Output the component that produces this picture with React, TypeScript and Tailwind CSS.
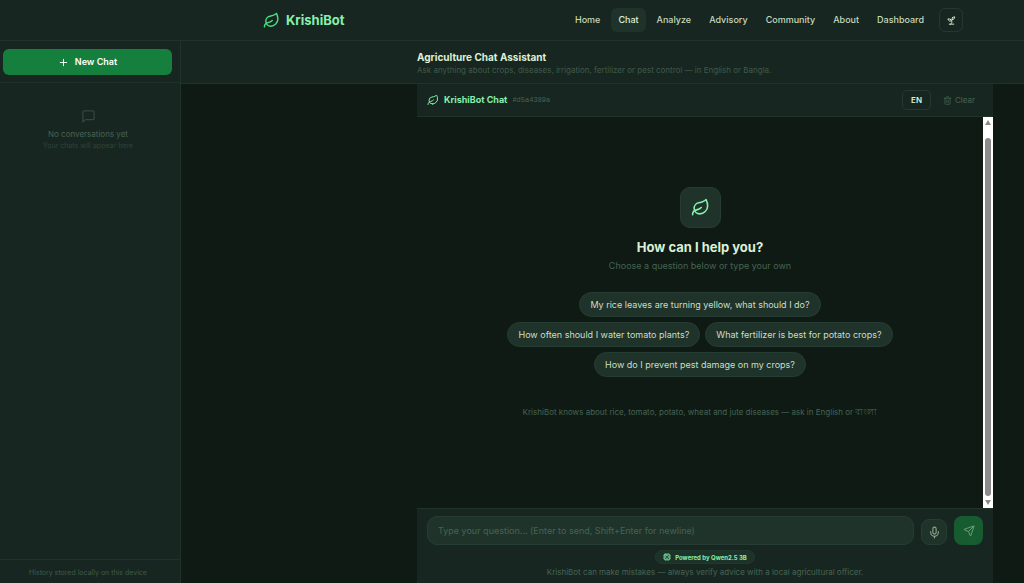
import React, { useState } from 'react';
import { Leaf, Mic, Plus, Send, Trash2, Cpu } from 'lucide-react';
import { FiMessageSquare } from 'react-icons/fi';

const navItems = ['Home', 'Chat', 'Analyze', 'Advisory', 'Community', 'About', 'Dashboard'];

const suggestions = [
  'My rice leaves are turning yellow, what should I do?',
  'How often should I water tomato plants?',
  'What fertilizer is best for potato crops?',
  'How do I prevent pest damage on my crops?',
];

function SeedlingIcon() {
  return (
    <svg width="11" height="11" viewBox="0 0 24 24" fill="none" stroke="currentColor" strokeWidth="2" strokeLinecap="round" strokeLinejoin="round">
      <path d="M7 20h10" />
      <path d="M10 20c5.5-2.5.8-6.4 3-10" />
      <path d="M9.5 9.4c1.1.8 1.8 2.2 2.3 3.7-2 .4-3.5.4-4.8-.3-1.2-.6-2.3-1.9-3-4.2 2.8-.5 4.4 0 5.5.8z" />
      <path d="M14.1 6a7 7 0 0 0-1.1 4c1.9-.1 3.3-.6 4.3-1.4 1-1 1.6-2.3 1.7-4.6-2.7.1-4 1-4.9 2z" />
    </svg>
  );
}

function Navbar() {
  return (
    <header className="flex h-[41px] shrink-0 items-center justify-between border-b border-[#20332b] bg-[#182621] pr-[61px] pl-[263px]">
      <a href="#home" className="flex items-center gap-1.5 text-[13px] leading-5 font-bold text-[#86efac]">
        <Leaf size={17} className="text-[#4ade80]" />
        KrishiBot
      </a>
      <div className="flex items-center gap-2">
        <nav className="flex items-center gap-1">
          {navItems.map((item) => (
            <a
              key={item}
              href={`#${item.toLowerCase()}`}
              className={
                item === 'Chat'
                  ? 'rounded-md bg-[#1f332b] px-[7px] py-1 text-[9px] leading-4 font-medium text-[#dcf0d5]'
                  : 'rounded-md px-[7px] py-1 text-[9px] leading-4 font-medium text-[#c5d9bd]'
              }
            >
              {item}
            </a>
          ))}
        </nav>
        <button aria-label="Toggle theme" className="flex size-6 items-center justify-center rounded-md border border-[#26392f] text-[#dcf0d5]">
          <SeedlingIcon />
        </button>
      </div>
    </header>
  );
}

function Sidebar() {
  return (
    <aside className="flex w-[181px] shrink-0 flex-col border-r border-[#20332b] bg-[#182621]">
      <div className="border-b border-[#20332b] pt-2 pr-2 pb-[7px] pl-[3px]">
        <button className="flex h-[26px] w-full items-center justify-center gap-1.5 rounded-md bg-[#15803d] text-[9px] font-semibold text-white">
          <Plus size={11} />
          New Chat
        </button>
      </div>
      <div className="flex flex-1 flex-col items-center pt-[26px] pr-1 text-center">
        <FiMessageSquare size={15} className="text-[#31483c]" />
        <p className="mt-1 text-[8px] leading-3 text-[#466353]">No conversations yet</p>
        <p className="text-[7px] leading-3 text-[#2e4438]">Your chats will appear here</p>
      </div>
      <p className="border-t border-[#20332b] pt-[7px] pr-1 pb-1 text-center text-[7px] leading-3 text-[#3f5a4a]">
        History stored locally on this device
      </p>
    </aside>
  );
}

function ChatHeader() {
  return (
    <div className="flex h-[33px] shrink-0 items-center justify-between border-b border-[#20332b] bg-[#182621] px-2.5">
      <div className="flex items-center gap-[5px]">
        <Leaf size={12} className="text-[#86efac]" />
        <h2 className="text-[9px] font-bold text-[#86efac]">KrishiBot Chat</h2>
        <span className="font-['Liberation_Mono',monospace] text-[7px] text-[#466353]">#d5a4389a</span>
      </div>
      <div className="flex items-center gap-1">
        <button className="h-5 rounded-[5px] border border-[#26392f] px-2 text-[8px] font-semibold text-[#dcf0d5]">EN</button>
        <button className="flex items-center gap-[3px] px-2 text-[8px] text-[#466353]">
          <Trash2 size={9} />
          Clear
        </button>
      </div>
    </div>
  );
}

function ScrollTrack() {
  return (
    <div className="flex w-2.5 shrink-0 flex-col items-center justify-between bg-white py-[3px]" aria-hidden="true">
      <svg width="6" height="5" viewBox="0 0 6 5">
        <path d="M3 0L6 5H0Z" fill="#8b8b8b" />
      </svg>
      <div className="mt-[13px] mb-1 w-1.5 flex-1 rounded-full bg-[#8b8b8b]" />
      <svg width="6" height="5" viewBox="0 0 6 5">
        <path d="M3 5L6 0H0Z" fill="#8b8b8b" />
      </svg>
    </div>
  );
}

function EmptyState({ onPick }: { onPick: (text: string) => void }) {
  return (
    <div className="flex flex-1 flex-col items-center pt-[70px] text-center">
      <div className="flex size-[41px] items-center justify-center rounded-[10px] border border-[#263d33] bg-[#1f332b]">
        <Leaf size={19} className="text-[#86efac]" />
      </div>
      <h3 className="mt-[9px] text-[13px] leading-5 font-bold text-[#dcf0d5]">How can I help you?</h3>
      <p className="mt-0.5 text-[9px] leading-3.5 text-[#466353]">Choose a question below or type your own</p>
      <div className="mt-[19px] flex max-w-[410px] flex-wrap justify-center gap-[5px]">
        {suggestions.map((text) => (
          <button
            key={text}
            onClick={() => onPick(text)}
            className="h-[25px] rounded-full border border-[#263d33] bg-[#1f332b] px-2.5 text-[9px] text-[#c9dfc3]"
          >
            {text}
          </button>
        ))}
      </div>
      <p className="mt-[29px] text-[8px] leading-3 text-[#466353]">
        KrishiBot knows about rice, tomato, potato, wheat and jute diseases — ask in English or{' '}
        <span lang="bn" className="text-[9px]">বাংলা</span>
      </p>
    </div>
  );
}

function App() {
  const [input, setInput] = useState('');

  return (
    <div className="flex h-screen flex-col overflow-hidden bg-[#0f1a14] font-['Inter',sans-serif]">
      <Navbar />
      <div className="flex min-h-0 flex-1">
        <Sidebar />
        <main className="flex min-w-0 flex-1 flex-col">
          <div className="h-[43px] shrink-0 border-b border-[#20332b] bg-[#182621] pt-[9px] pl-[236px]">
            <h1 className="text-[10px] leading-3.5 font-bold text-[#dcf0d5]">Agriculture Chat Assistant</h1>
            <p className="text-[8px] leading-3 text-[#3f5a4a]">
              Ask anything about crops, diseases, irrigation, fertilizer or pest control — in English or Bangla.
            </p>
          </div>
          <section className="mr-[31px] ml-[236px] flex min-h-0 flex-1 flex-col">
            <ChatHeader />
            <div className="flex min-h-0 flex-1">
              <EmptyState onPick={setInput} />
              <ScrollTrack />
            </div>
            <form
              onSubmit={(e) => e.preventDefault()}
              className="flex shrink-0 flex-col items-center border-t border-[#20332b] bg-[#182621] px-2.5 pt-[7px] pb-[5px]"
            >
              <div className="flex w-full items-end gap-[7px]">
                <input
                  aria-label="Your question"
                  value={input}
                  onChange={(e) => setInput(e.target.value)}
                  placeholder="Type your question... (Enter to send, Shift+Enter for newline)"
                  className="h-[29px] min-w-0 flex-1 rounded-[10px] border border-[#263d33] bg-[#1f332b] px-2.5 text-[9px] text-[#dcf0d5] outline-none placeholder:text-[#466353]"
                />
                <button type="button" aria-label="Voice input" className="flex size-[26px] items-center justify-center rounded-lg border border-[#263d33] bg-[#1f332b] text-[#8fa88f]">
                  <Mic size={13} />
                </button>
                <button aria-label="Send" className="flex size-[29px] items-center justify-center rounded-lg bg-[#175c31] text-[#6f9a7c]">
                  <Send size={12} />
                </button>
              </div>
              <div className="mt-[5px] flex h-3.5 items-center gap-1 rounded-full border border-[#20392d] bg-[#1d3329] px-[7px] text-[6px] font-bold text-[#86efac]">
                <Cpu size={8} />
                Powered by Qwen2.5 3B
              </div>
              <p className="mt-0.5 text-[8px] leading-3 text-[#466353]">
                KrishiBot can make mistakes — always verify advice with a local agricultural officer.
              </p>
            </form>
          </section>
        </main>
      </div>
    </div>
  );
}

export default App;
